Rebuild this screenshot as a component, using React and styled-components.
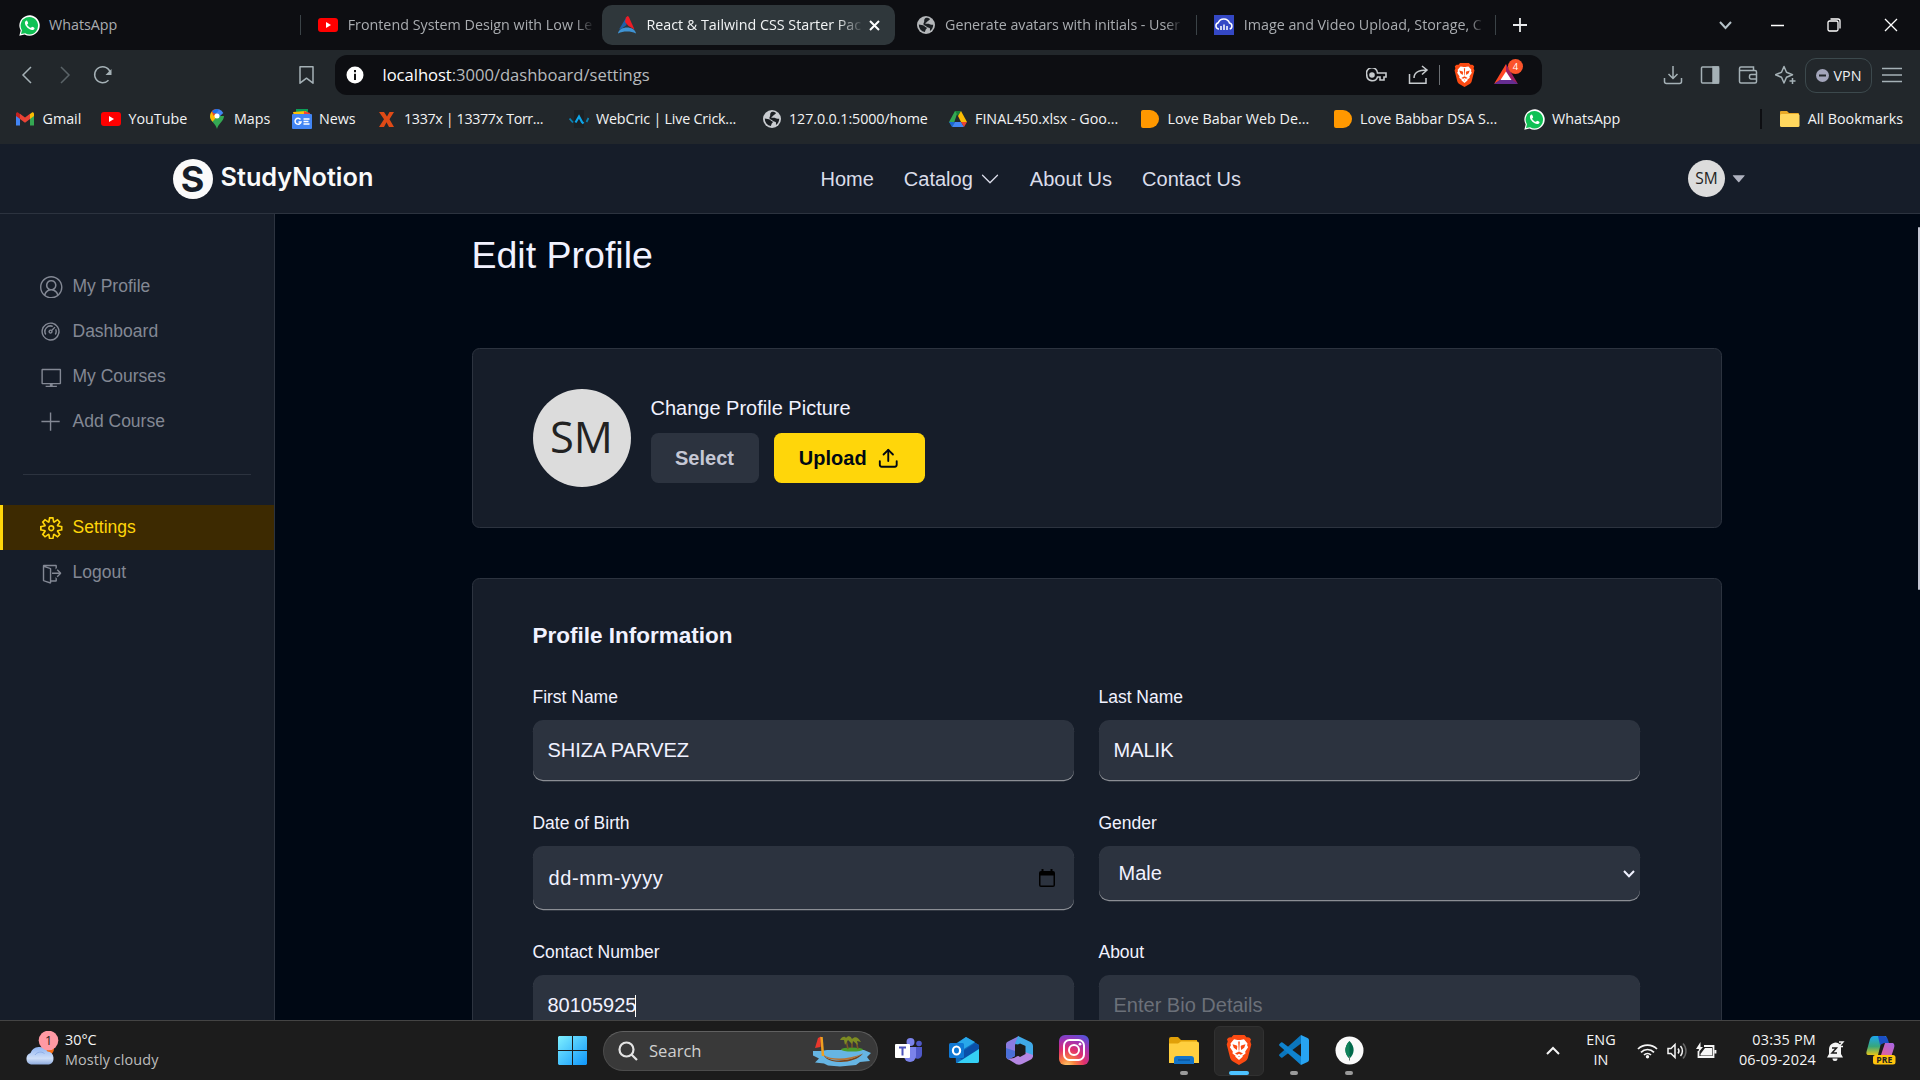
import React from 'react';
import styled, { createGlobalStyle } from 'styled-components';
import {
  VscAccount, VscDashboard, VscVm, VscAdd, VscSettingsGear, VscSignOut,
} from 'react-icons/vsc';
import { BsChevronDown } from 'react-icons/bs';
import { AiOutlineCaretDown } from 'react-icons/ai';
import { FiUpload } from 'react-icons/fi';

const GlobalStyle = createGlobalStyle`
  * { box-sizing: border-box; }
  body { margin: 0; background: #000814; overflow: hidden; }
  svg { display: block; flex: none; }
`;

const ui = '"Open Sans", "Noto Sans", sans-serif';

const Screen = styled.div`
  width: 1920px;
  height: 1080px;
  display: flex;
  flex-direction: column;
  overflow: hidden;
  background: #000814;
  font-family: "Liberation Sans", Arial, sans-serif;
  color: #f1f2ff;
`;

/* ---------- Browser chrome ---------- */
const TabStrip = styled.div`
  height: 50px;
  flex: none;
  display: flex;
  align-items: center;
  padding-left: 4.5px;
  background: #0d0e12;
  font: 14.3px ${ui};
`;

const Tab = styled.div`
  width: 293px;
  height: 40px;
  margin-right: 5.7px;
  flex: none;
  display: flex;
  align-items: center;
  padding: 0 15px;
  border-radius: 10px;
  color: ${(p) => (p.$active ? '#f2f4f5' : '#a9acb0')};
  background: ${(p) => (p.$active ? '#2f373b' : 'transparent')};
`;

const TabTitle = styled.span`
  margin-left: 9.5px;
  padding-bottom: 2px;
  white-space: nowrap;
  letter-spacing: ${(p) => p.$track || 0}px;
  mask-image: ${(p) => (p.$fade ? `linear-gradient(to right, #000 calc(100% - ${p.$fade}px), rgba(0, 0, 0, 0.12))` : 'none')};
`;

const TabRule = styled.i`
  width: 1px;
  height: 20px;
  margin: 0 2px 0 -3px;
  background: #3b4347;
`;

const TabClose = styled.span`
  margin-left: auto;
`;

const NewTab = styled.div`
  width: 44px;
  display: flex;
  justify-content: center;
`;

const WindowButtons = styled.div`
  margin-left: auto;
  display: flex;
  align-items: center;
  padding-right: 22px;
  gap: 43px;
  & > :first-child { margin-right: -4px; }
`;

const Toolbar = styled.div`
  height: 50px;
  flex: none;
  display: flex;
  align-items: center;
  background: #22272b;
  color: #a5b1b6;
  font-family: ${ui};
`;

const NavButtons = styled.div`
  width: 335px;
  height: 40px;
  display: flex;
  align-items: center;
  padding: 0 21px 0 17px;
  gap: 18px;
  & > :last-child { margin-left: auto; }
`;

const Omnibox = styled.div`
  width: 1207px;
  height: 40px;
  display: flex;
  align-items: center;
  padding: 0 18px 0 11px;
  border-radius: 12px;
  background: #0d0e12;
`;

const Url = styled.span`
  margin-left: 18.5px;
  padding-bottom: 2px;
  font-size: 16.6px;
  letter-spacing: -0.03px;
  color: #b7babd;
  b { font-weight: 400; color: #fff; }
`;

const OmniActions = styled.div`
  margin-left: auto;
  display: flex;
  align-items: center;
  gap: 21px;
`;

const Shields = styled.div`
  display: flex;
  align-items: center;
  gap: 14px;
  margin-left: -11px;
`;

const OmniRule = styled.i`
  width: 1px;
  height: 20px;
  background: #6b6f73;
`;

const Rewards = styled.div`
  position: relative;
  margin-left: -2px;
  width: 30px;
  height: 22px;
`;

const Badge = styled.span`
  position: absolute;
  top: -5px;
  right: 1px;
  width: 15px;
  height: 15px;
  border-radius: 8px;
  background: #fb542b;
  color: #fff;
  font-size: 9.5px;
  line-height: 15px;
  text-align: center;
`;

const ToolbarEnd = styled.div`
  margin-left: auto;
  display: flex;
  align-items: center;
  padding-right: 18px;
`;

const ToolIcons = styled.div`
  display: flex;
  gap: 17.5px;
  margin-right: 9px;
`;

const Vpn = styled.div`
  width: 67px;
  height: 35px;
  margin-right: 10px;
  display: flex;
  align-items: center;
  justify-content: center;
  gap: 5px;
  border: 1px solid #3c494d;
  border-radius: 11px;
  color: #eef0f2;
  font-size: 14.3px;
`;

const BookmarkBar = styled.div`
  height: 44px;
  flex: none;
  display: flex;
  align-items: center;
  padding: 0 17px 6px 15px;
  background: #22272b;
  color: #f2f3f4;
  font: 14.3px ${ui};
`;

const Bookmark = styled.div`
  width: ${(p) => p.$width}px;
  flex: none;
  display: flex;
  align-items: center;
  gap: 7.5px;
  white-space: nowrap;
  letter-spacing: ${(p) => p.$track || 0}px;
`;

const BarText = styled.span`
  padding-bottom: 2px;
`;

const IconSlot = styled.span`
  width: 20px;
  height: 20px;
  flex: none;
  display: flex;
  align-items: center;
  justify-content: center;
`;

const AllBookmarks = styled.div`
  margin-left: auto;
  height: 20px;
  display: flex;
  align-items: center;
  gap: 8px;
  padding-left: 18px;
  border-left: 2px solid #0d0e12;
`;

/* ---------- Site ---------- */
const SiteHeader = styled.header`
  height: 70px;
  flex: none;
  display: flex;
  justify-content: center;
  background: #161d29;
  border-bottom: 1px solid #2c333f;
`;

const HeaderInner = styled.div`
  width: 1575px;
  display: flex;
  align-items: center;
`;

const Logo = styled.div`
  width: 648px;
  display: flex;
  align-items: center;
  gap: 8px;
  color: #fafafa;
  font: 600 25.3px/40px Inter, sans-serif;
  white-space: nowrap;
  & > span:last-child { padding-bottom: 3px; }
`;

const LogoMark = styled.span`
  width: 40px;
  height: 40px;
  flex: none;
  display: flex;
  align-items: center;
  justify-content: center;
  border-radius: 50%;
  background: #fafafa;
  color: #161d29;
  font: 700 36px/40px Inter, sans-serif;
`;

const Nav = styled.nav`
  display: flex;
  align-items: center;
  gap: 30px;
  padding-top: 1px;
  font-size: 20px;
  color: #dbddea;
`;

const NavItem = styled.span`
  display: flex;
  align-items: center;
  gap: 7px;
`;

const Account = styled.div`
  margin-left: auto;
  display: flex;
  align-items: center;
  gap: 5px;
  color: #afb2bf;
`;

const Avatar = styled.span`
  width: ${(p) => p.$size}px;
  height: ${(p) => p.$size}px;
  flex: none;
  display: flex;
  align-items: center;
  justify-content: center;
  padding: 0 0 ${(p) => p.$size * 0.03}px;
  border-radius: 50%;
  background: #dcdcdc;
  color: #222;
  font: ${(p) => p.$font}px ${ui};
`;

const Page = styled.div`
  flex: 1;
  min-height: 0;
  display: flex;
  overflow: hidden;
`;

const Sidebar = styled.aside`
  width: 275px;
  flex: none;
  padding-top: 50px;
  background: #161d29;
  border-right: 1px solid #2c333f;
`;

const SideItem = styled.div`
  height: 45px;
  display: flex;
  align-items: center;
  gap: 10px;
  padding-left: ${(p) => (p.$active ? 37 : 40)}px;
  border-left: ${(p) => (p.$active ? '3px solid #ffd60a' : '0')};
  background: ${(p) => (p.$active ? '#3d2a01' : 'transparent')};
  color: ${(p) => (p.$active ? '#ffd60a' : '#838894')};
  font-size: 17.5px;
  svg { margin-top: 1px; }
`;

const SideRule = styled.hr`
  width: 228px;
  height: 1px;
  margin: 30px 0 30px 23px;
  border: 0;
  background: #2c333f;
`;

const Content = styled.main`
  flex: 1;
  display: flex;
  flex-direction: column;
  align-items: center;
  padding: 19px 0 0;
`;

const ScrollTrack = styled.div`
  width: 2px;
  flex: none;
  padding-top: 13px;
`;

const ScrollThumb = styled.div`
  height: 363px;
  border-radius: 1px;
  background: #c5c7d4;
`;

const Column = styled.div`
  width: 1250px;
  display: flex;
  flex-direction: column;
`;

const Title = styled.h1`
  margin: 0 0 70px;
  font-size: 37.5px;
  line-height: 45px;
  font-weight: 400;
`;

const PictureCard = styled.section`
  height: 180px;
  flex: none;
  display: flex;
  align-items: center;
  gap: 20px;
  padding: 0 60px;
  border: 1px solid #2c333f;
  border-radius: 7.5px;
  background: #161d29;
`;

const PictureBody = styled.div`
  display: flex;
  flex-direction: column;
  gap: 10px;
  font-size: 20px;
  line-height: 30px;
`;

const Actions = styled.div`
  display: flex;
  gap: 15px;
`;

const Button = styled.button`
  width: ${(p) => p.$width}px;
  height: 50px;
  padding: 0;
  display: flex;
  align-items: center;
  justify-content: center;
  gap: 10px;
  border: 0;
  border-radius: 7.5px;
  background: ${(p) => (p.$primary ? '#ffd60a' : '#2c333f')};
  color: ${(p) => (p.$primary ? '#000814' : '#c5c7d4')};
  font: 700 20px "Liberation Sans", Arial, sans-serif;
`;

const FormCard = styled.section`
  height: 560px;
  flex: none;
  margin-top: 50px;
  padding: 39px 60px;
  border: 1px solid #2c333f;
  border-radius: 7.5px;
  background: #161d29;
`;

const FormTitle = styled.h2`
  margin: 0 0 31px;
  font-size: 22.5px;
  line-height: 35px;
  font-weight: 700;
`;

const Fields = styled.div`
  display: grid;
  grid-template-columns: 541px 541.5px;
  column-gap: 25px;
  row-gap: 30px;
  align-items: start;
`;

const Field = styled.div`
  display: flex;
  flex-direction: column;
  gap: 10px;
`;

const Label = styled.span`
  font-size: 17.5px;
  line-height: 26px;
  letter-spacing: -0.02px;
`;

const Control = styled.div`
  height: ${(p) => p.$height || 60}px;
  display: flex;
  align-items: center;
  padding: 1px ${(p) => p.$right || 15}px 0 ${(p) => p.$left || 15}px;
  border-radius: 10px;
  background: #2c333f;
  box-shadow: 0 1.25px 0 rgba(255, 255, 255, 0.5);
  color: ${(p) => (p.$placeholder ? '#6b7079' : '#f1f2ff')};
  font-size: 20px;
  & > svg { margin-left: auto; }
`;

const DateText = styled.span`
  letter-spacing: 0.6px;
`;

const Caret = styled.i`
  width: 1px;
  height: 22px;
  margin-left: -1px;
  background: #fff;
`;

/* ---------- Taskbar ---------- */
const Taskbar = styled.footer`
  height: 60px;
  flex: none;
  display: flex;
  align-items: center;
  background: #1c1c1c;
  border-top: 1px solid #444;
  color: #f5f5f5;
  font: 14.4px/20px ${ui};
`;

const Weather = styled.div`
  width: 547px;
  padding-left: 23px;
  display: flex;
  align-items: center;
  gap: 6px;
`;

const WeatherText = styled.div`
  display: flex;
  flex-direction: column;
  padding-bottom: 2px;
  span:last-child { color: #bdbdbd; letter-spacing: 0.1px; }
`;

const TaskApps = styled.div`
  display: flex;
  align-items: center;
`;

const TaskButton = styled.div`
  position: relative;
  width: 50px;
  height: 50px;
  margin-right: ${(p) => (p.$gap == null ? 5 : p.$gap)}px;
  flex: none;
  display: flex;
  align-items: center;
  justify-content: center;
  padding-bottom: 1px;
  border-radius: 6px;
  border: 1px solid ${(p) => (p.$active ? '#313131' : 'transparent')};
  background: ${(p) => (p.$active ? '#282828' : 'transparent')};
`;

const RunMark = styled.i`
  position: absolute;
  bottom: 0;
  left: 50%;
  width: ${(p) => (p.$active ? 20 : 8)}px;
  height: 4px;
  margin-left: ${(p) => (p.$active ? -10 : -4)}px;
  border-radius: 2px;
  background: ${(p) => (p.$active ? '#4cc2ff' : '#9a9a9a')};
`;

const SearchBox = styled.div`
  width: 275px;
  height: 40px;
  margin-right: 6px;
  display: flex;
  align-items: center;
  padding: 0 5px 0 14px;
  border: 1px solid #4c4c4c;
  border-top-color: #606060;
  border-radius: 20px;
  background: #393939;
  color: #d0d0d0;
  font-size: 16.6px;
  span { margin-left: 11px; }
  svg:last-child { margin-left: auto; }
`;

const Tray = styled.div`
  margin-left: auto;
  display: flex;
  align-items: center;
  padding-right: 24px;
`;

const Language = styled.div`
  width: 50px;
  margin: 0 11px 0 16px;
  padding-bottom: 1px;
  text-align: center;
`;

const TrayIcons = styled.div`
  display: flex;
  align-items: center;
  gap: 9px;
`;

const Clock = styled.div`
  width: 90px;
  margin: 0 11px 0 9px;
  padding-bottom: 2px;
  text-align: right;
  white-space: nowrap;
  letter-spacing: 0.2px;
`;

const Copilot = styled.div`
  margin-left: 21px;
`;

/* ---------- Icons ---------- */
const Stroke = ({ w = 20, h = 20, box, sw = 1.5, children, ...rest }) => (
  <svg width={w} height={h} viewBox={box || `0 0 ${w} ${h}`} fill="none" stroke="currentColor" strokeWidth={sw} {...rest}>
    {children}
  </svg>
);

const WhatsAppIcon = () => (
  <svg width="21" height="21" viewBox="0 0 20 20">
    <path d="M.3 19.8l1.3-5A9.7 9.7 0 1110 19.7a9.7 9.7 0 01-4.700-1.200z" fill="#fff" />
    <path d="M1.900 18.200l.9-3.600a8.300 8.300 0 117.200 3.900 8.300 8.300 0 01-4.100-1.200z" fill="#10c154" />
    <path d="M7.200 5.300c-.5 0-1.700.9-1.600 2.400.2 3 4 6.600 6.900 6.700 1.400 0 2.300-1 2.300-1.900 0-.5-2-1.500-2.400-1.400-.5.200-.8 1.200-1.300 1.100-1.200-.3-3-2-3.300-3 0-.4.900-.8.900-1.300 0-.6-.8-2.600-1.500-2.600z" fill="#fff" />
  </svg>
);

const YouTubeIcon = () => (
  <svg width="20" height="14" viewBox="0 0 20 14">
    <rect width="20" height="14" rx="3" fill="#f00" />
    <path d="M8 4l5 3-5 3z" fill="#fff" />
  </svg>
);

const AppIcon = () => (
  <svg width="20" height="18" viewBox="0 0 20 18">
    <path d="M9.500 1L9.500 9 5 12.500l-3 1z" fill="#1e5fa8" />
    <path d="M9 1.500L10.500 0l1.300.8L17.500 13.500 11.500 10 8 6z" fill="#ee1c25" />
    <path d="M1 17.500c.5-4 5-6 9-6s8.500 2 9 6c-3-1.500-5.500-2-9-2s-6 .5-9 2z" fill="#3f93d3" />
  </svg>
);

const GlobeIcon = ({ color }) => (
  <svg width="18" height="18" viewBox="0 0 18 18">
    <circle cx="9" cy="9" r="9" fill={color} />
    <path d="M1.800 8.500l4.200.7c1.500.3 1.600 1.700 3 2 1 .3 1 1.300.2 1.900-.8.700-.6 1.800-1.400 3A7.300 7.300 0 011.800 8.500zM9 1.700c1.300-.1 3 .3 4 1.200-.2 1-1.200.8-1.500 1.700-.2.900-1.200.8-1.700 1.500-.4.700-1.400.5-1.600 1.400 1.500.4 3.300-.2 4.500.7.900.7 2.300.2 3.500.6A7.300 7.300 0 0113 14.900c-.3-1.300.6-2-.4-2.900-.8-.7-2.200-.4-2.900-1.300C8.800 9.600 6.500 9.500 6.400 8c0-1.300 1-1.800.8-3C7 3.600 7.800 1.900 9 1.700z" fill="#1b1f23" />
  </svg>
);

const CloudIcon = () => (
  <svg width="20" height="20" viewBox="0 0 20 20">
    <rect width="20" height="20" fill="#3448c5" />
    <path d="M5 14H4.500a3.200 3.200 0 01-.3-6.200A6 6 0 0115.500 8a3.100 3.100 0 01.2 6M7 15v-4M10 15V9.500M13 15v-4" fill="none" stroke="#fff" strokeWidth="1.500" />
  </svg>
);

const GmailIcon = () => (
  <svg width="18" height="14" viewBox="0 0 18 14">
    <path d="M0 2v11.500h4V6z" fill="#4285f4" />
    <path d="M18 2v11.500h-4V6z" fill="#34a853" />
    <path d="M14 2l2-1.600c1-.6 2 .2 2 1.600v2l-4 3z" fill="#fbbc04" />
    <path d="M4 2L2 .4C1 -.2 0 .6 0 2v2l4 3z" fill="#c5221f" />
    <path d="M4 1.800l5 3.800 5-3.800V7l-5 3.800L4 7z" fill="#ea4335" />
  </svg>
);

const MapsIcon = () => (
  <svg width="14" height="20" viewBox="0 0 14 20">
    <path d="M7 20C6 15 0 12 0 7h14c0 5-6 8-7 13z" fill="#34a853" />
    <path d="M0 7c0 2.500 1.200 4.200 2.500 5.700L10 4 4 1A7 7 0 000 7z" fill="#fbbc04" />
    <path d="M1.600 2.500A7 7 0 019.300.4L3.500 7z" fill="#ea4335" />
    <path d="M9 .3A7 7 0 0113.300 4L9 8 5.500 4.500z" fill="#4285f4" />
    <path d="M2 2.200A7 7 0 019 .3L6.500 4 4 4.500z" fill="#1a73e8" />
    <circle cx="7" cy="7" r="2.500" fill="#fff" />
  </svg>
);

const NewsIcon = () => (
  <svg width="20" height="20" viewBox="0 0 20 20">
    <path d="M4 0h12v6H4z" fill="#0c9d58" />
    <path d="M1 3l13-1 3 5H2z" fill="#ffc107" />
    <path d="M12 2l6 2-1 4h-5z" fill="#f44336" />
    <rect y="5" width="20" height="15" rx="1" fill="#4285f4" />
    <path d="M8.500 10.500A3 3 0 109 13H6.500M11.500 10h6M11.500 12.500h5M11.500 15h6" fill="none" stroke="#fff" strokeWidth="1.500" />
  </svg>
);

const XIcon = () => (
  <svg width="15" height="15" viewBox="0 0 15 15">
    <path d="M0 0h5l3 4.500L10.500 0H15l-4.500 7.300L15 15h-5l-2.500-4.700L5 15H0l5-7.700z" fill="#df4a16" />
  </svg>
);

const CricIcon = () => (
  <svg width="20" height="20" viewBox="0 0 20 20" fill="none">
    <path d="M5 1h10v18H5z" fill="#1c2023" />
    <path d="M0.500 9.500l3.500 4M19.500 9l-2 4" stroke="#0b84b5" strokeWidth="1.800" />
    <path d="M6.500 13.500l3.500-6 3 5.500 1.500 1.500" stroke="#0ea5e9" strokeWidth="2.200" />
  </svg>
);

const DriveIcon = () => (
  <svg width="18" height="16" viewBox="0 0 18 16">
    <path d="M6 0h3L4 15 0 11z" fill="#34a853" />
    <path d="M6 0h6L9 5z" fill="#188038" />
    <path d="M12 0l6 11h-6L9 5z" fill="#fbbc04" />
    <path d="M0 11h6l-3 5z" fill="#1967d2" />
    <path d="M6 11h6l3 5H3z" fill="#4285f4" />
    <path d="M12 11h6l-3 5z" fill="#ea4335" />
  </svg>
);

const OrangeD = () => (
  <svg width="18" height="18" viewBox="0 0 18 18">
    <path d="M2 0h7a9 9 0 010 18H2a2 2 0 01-2-2V2a2 2 0 012-2z" fill="#ff9800" />
  </svg>
);

const FolderIcon = () => (
  <svg width="20" height="18" viewBox="0 0 20 18">
    <path d="M0 2a1 1 0 011-1h6l2 2h9a1 1 0 011 1v12H0z" fill="#e8a927" />
    <rect y="4" width="19.500" height="13" rx="1.500" fill="#ffd75e" />
  </svg>
);

const BraveIcon = ({ size, h }) => (
  <svg width={size} height={h} viewBox="0 0 26 30" preserveAspectRatio="none">
    <path d="M7.500 0h11l2.300 2.400c2-.5 3 .3 4.200 1.800L24.300 6.500l1 3-3.400 13.200c-.5 1.700-1.200 2.500-2.500 3.500L13 30l-6.400-3.800c-1.300-1-2-1.800-2.500-3.500L.7 9.500l1-3L1 4.200c1.200-1.500 2.200-2.300 4.200-1.800z" fill="#fb4a12" />
    <path d="M8 4.300l2.500.5c1.500.4 3.500.4 5 0l2.500-.5 3.500 4.200-.4 1.800 1 2-2.900 4.200.3 2-3 2.300.2 1L13 25l-3.700-3.200.2-1-3-2.300.3-2L3.900 12.300l1-2-.4-1.800z" fill="#fff" />
    <path d="M6.500 9.300l4.300 1.200.5 1-.5 3.500-3-2.200zM19.500 9.300l-4.300 1.200-.5 1 .5 3.500 3-2.200zM12.200 6.500h1.600l-.5 9h-.6zM9 18.600l4-2 4 2-2.300 1.200L13 18.700l-1.700 1.100zM12.300 21h1.400l-.7 1.300z" fill="#fb4a12" />
  </svg>
);

const BatIcon = () => (
  <svg width="24" height="20" viewBox="0 0 24 20">
    <path d="M12 0L0 20l12-7z" fill="#ff4724" />
    <path d="M12 0l12 20-12-7z" fill="#9e1f63" />
    <path d="M0 20h24l-7-5H7z" fill="#662d91" />
    <path d="M12 7.500L17.500 16h-11z" fill="#fff" />
  </svg>
);

const WeatherIcon = () => (
  <svg width="36" height="40" viewBox="0 0 36 40">
    <defs>
      <linearGradient id="cloud" x1="0" y1="0" x2="0" y2="1">
        <stop offset="0" stopColor="#8fb4f2" />
        <stop offset=".65" stopColor="#cfdff8" />
        <stop offset="1" stopColor="#8facde" />
      </linearGradient>
    </defs>
    <circle cx="25" cy="18" r="6" fill="#f26a11" />
    <path d="M8 33.500a6 6 0 01-.5-11.500 9.500 9.500 0 0117-1.500A6.700 6.700 0 0126 33.500z" fill="url(#cloud)" />
    <path d="M12 24c2-3 6-4 9.500-1.500" fill="none" stroke="#8fb0e8" />
    <circle cx="25.500" cy="9.500" r="9.800" fill="#ff99a4" />
    <text x="25.500" y="14" textAnchor="middle" fontFamily="Open Sans" fontSize="12.500" fill="#1b1b1b">1</text>
  </svg>
);

const StartIcon = () => (
  <svg width="29" height="29" viewBox="0 0 29 29">
    <defs>
      <linearGradient id="win" x1="0" y1="0" x2="1" y2="1">
        <stop offset="0" stopColor="#7ff0ff" />
        <stop offset="1" stopColor="#0f96fb" />
      </linearGradient>
    </defs>
    <path d="M1 0h13v14H0V1zM15 0h13l1 1v13H15zM0 15h14v14H1l-1-1zM15 15h14v13l-1 1H15z" fill="url(#win)" />
  </svg>
);

const BoatArt = () => (
  <svg width="60" height="32" viewBox="0 0 60 32">
    <path d="M1 16h8l6-1h14l10-1 13 1 7 3-4 4 3 4-10 1-4 3-16 1.500-12-1-4-2-9-1 4-4-6-3z" fill="#66b5e3" />
    <ellipse cx="40" cy="14.500" rx="11" ry="2" fill="#4c9a2a" />
    <path d="M36 14l-2-9M46 14l-2-8M40 13V6" stroke="#7a5a26" strokeWidth="1.500" fill="none" />
    <path d="M28 5c2-4 5-4 6-2 2-3 5-2 6 1 3-3 6-2 9 3l-4-1 1 4-5-4-1 3-4-4-3 5-1-5z" fill="#7d8c22" />
    <path d="M10 12l1.500 8c6 8 26 7 39.500-1.500C45 26 31 28.500 20 26 12 23.500 10 20 10 12z" fill="#7a4217" />
    <path d="M11.500 20c8 5 24 5 39.500-1.500-8 4-12 7-24 6.500-9-.5-14-2-15.500-5z" fill="#b87333" />
    <path d="M3 13l3-10 3-1.500L8.500 12z" fill="#e8372c" />
    <path d="M9.500 2l1.500 19" stroke="#f0a020" strokeWidth="2.500" />
  </svg>
);

const TeamsIcon = () => (
  <svg width="28" height="25" viewBox="0 0 28 25">
    <circle cx="15.500" cy="4" r="4" fill="#7b83eb" />
    <circle cx="24" cy="5.500" r="2.800" fill="#5059c9" />
    <path d="M19 9h8v7a4.500 4.500 0 01-8 3z" fill="#5059c9" />
    <path d="M9 9h12v9a6 6 0 01-12 0z" fill="#7b83eb" />
    <rect y="6" width="15" height="14" rx="1" fill="#fff" />
    <path d="M4 9.500h7M7.500 9.500v8" stroke="#4b53bc" strokeWidth="2" />
  </svg>
);

const OutlookIcon = () => (
  <svg width="30" height="27" viewBox="0 0 30 27">
    <path d="M6 7L17 0l13 8v16a2 2 0 01-2 2H7z" fill="#0f6cbd" />
    <path d="M17 0l9 5-16 10-3-8z" fill="#28a8ea" />
    <path d="M30 8v6L14 24l-6-6L26 6z" fill="#0a4fa8" />
    <path d="M30 12v12a2 2 0 01-2 2H8z" fill="#35d0f5" />
    <rect y="6" width="15" height="15" rx="1.500" fill="#0f78d4" />
    <ellipse cx="7.500" cy="13.500" rx="3.600" ry="4" fill="none" stroke="#fff" strokeWidth="2.200" />
  </svg>
);

const OfficeIcon = () => (
  <svg width="27" height="29" viewBox="0 0 27 29">
    <path d="M13 0L2 5.500A3 3 0 000 8v12c0 2 1 3 2.500 3.500L9 20V9z" fill="#8b7be0" />
    <path d="M12 0l11.500 5.500A5 5 0 0127 10v11l-8-3v-8L9 8z" fill="#3fa9e8" />
    <path d="M27 19c0 3-1 4-3 5l-8 4c-2 1-4 1-6 0L2 23l6-1 11-6z" fill="#b587e3" />
    <path d="M9 20l-7 3.500L0 20V12l9 3z" fill="#4a6fd8" />
    <path d="M9 10l5-2.500 5.500 2.500v8L14 21l-5-3z" fill="#1c1c1c" />
  </svg>
);

const InstagramIcon = () => (
  <svg width="30" height="30" viewBox="0 0 30 30">
    <defs>
      <radialGradient id="ig" cx=".28" cy="1.050" r="1.150">
        <stop offset="0" stopColor="#fed373" />
        <stop offset=".22" stopColor="#f9833f" />
        <stop offset=".5" stopColor="#e1306c" />
        <stop offset=".78" stopColor="#a033b5" />
        <stop offset="1" stopColor="#5b51d8" />
      </radialGradient>
    </defs>
    <rect width="30" height="30" rx="6" fill="url(#ig)" />
    <rect x="5" y="5" width="20" height="20" rx="5.500" fill="none" stroke="#fff" strokeWidth="2" />
    <circle cx="15" cy="15" r="5" fill="none" stroke="#fff" strokeWidth="2" />
    <circle cx="21" cy="9.200" r="1.400" fill="#fff" />
  </svg>
);

const ExplorerIcon = () => (
  <svg width="30" height="27" viewBox="0 0 30 27">
    <path d="M0 2a2 2 0 012-2h7l3 3h16v8H0z" fill="#e0a008" />
    <path d="M12 4.500h16a2 2 0 012 2V26H0V6.500h9z" fill="#ffcf3f" />
    <path d="M5 22a3 3 0 013-3h14a3 3 0 013 3v5H5z" fill="#1374c9" />
    <path d="M9 23h12" stroke="#0a4f96" strokeWidth="1.200" />
  </svg>
);

const VsCodeIcon = () => (
  <svg width="30" height="30" viewBox="0 0 30 30">
    <path d="M22 8.500L3.500 22.500a1.200 1.200 0 01-1.500 0L.5 21a1.200 1.200 0 010-1.700L22 0z" fill="#0b76bd" />
    <path d="M22 21.500L3.500 7.500a1.200 1.200 0 00-1.500 0L.5 9a1.200 1.200 0 000 1.700L22 30z" fill="#0f83cf" />
    <path d="M22 0l6.500 3A2.500 2.500 0 0130 5v20a2.500 2.500 0 01-1.500 2L22 30z" fill="#27a4f2" />
  </svg>
);

const MongoIcon = () => (
  <svg width="29" height="29" viewBox="0 0 29 29">
    <circle cx="14.500" cy="14.500" r="14" fill="#fafafa" />
    <path d="M14.500 5c6 6 5 13 0 17.500C9.500 18 8.500 11 14.500 5z" fill="#00684a" />
    <path d="M14.500 5c-6 6-5 13 0 17.500z" fill="#12825b" />
    <path d="M14.500 20v4.500" stroke="#5c7a6c" />
  </svg>
);

const CopilotIcon = () => (
  <svg width="30" height="29" viewBox="0 0 30 29">
    <defs>
      <linearGradient id="cp1" x1="0" y1="0" x2="0" y2="1">
        <stop offset="0" stopColor="#1ca7ee" />
        <stop offset=".55" stopColor="#38a67b" />
        <stop offset="1" stopColor="#e6c619" />
      </linearGradient>
      <linearGradient id="cp2" x1="1" y1="0" x2="0" y2="1">
        <stop offset="0" stopColor="#a566e8" />
        <stop offset="1" stopColor="#f0608a" />
      </linearGradient>
    </defs>
    <path d="M8 0h12l2 6-7 1-3 12H3c-3 0-3-2-2-5L4 3c1-2 2-3 4-3z" fill="url(#cp1)" />
    <path d="M12 0h6c2 0 3 1 4 4l1 3h-5l-4 2z" fill="#1b4fc4" />
    <path d="M19 7h7c2 0 3 2 2 5l-3 9H12c3 0 3-2 4-5z" fill="url(#cp2)" />
    <rect x="7" y="19" width="22.500" height="9.500" rx="2.500" fill="#ffc40c" />
    <text x="18.300" y="27" textAnchor="middle" fontFamily="Open Sans" fontWeight="700" fontSize="8.600" fill="#222">PRE</text>
  </svg>
);

/* ---------- Data ---------- */
const tabs = [
  { title: 'WhatsApp', icon: <WhatsAppIcon /> },
  { title: 'Frontend System Design with Low Le', icon: <YouTubeIcon />, fade: 16, rule: true },
  { title: 'React & Tailwind CSS Starter Pac', icon: <AppIcon />, fade: 24, active: true },
  { title: 'Generate avatars with initials - User', icon: <GlobeIcon color="#b4b7ba" />, fade: 14, track: -0.05 },
  { title: 'Image and Video Upload, Storage, C', icon: <CloudIcon />, fade: 12, rule: true },
];

const bookmarks = [
  { title: 'Gmail', icon: <GmailIcon />, width: 86 },
  { title: 'YouTube', icon: <YouTubeIcon />, width: 105.5 },
  { title: 'Maps', icon: <MapsIcon />, width: 85 },
  { title: 'News', icon: <NewsIcon />, width: 85 },
  { title: '1337x | 13377x Torr...', icon: <XIcon />, width: 192, track: -0.36 },
  { title: 'WebCric | Live Crick...', icon: <CricIcon />, width: 193, track: -0.2 },
  { title: '127.0.0.1:5000/home', icon: <GlobeIcon color="#c9ccd0" />, width: 186, track: -0.1 },
  { title: 'FINAL450.xlsx - Goo...', icon: <DriveIcon />, width: 192.5 },
  { title: 'Love Babar Web De...', icon: <OrangeD />, width: 192.5 },
  { title: 'Love Babbar DSA S...', icon: <OrangeD />, width: 192 },
  { title: 'WhatsApp', icon: <WhatsAppIcon />, width: 110 },
];

const mainLinks = [
  ['My Profile', VscAccount],
  ['Dashboard', VscDashboard],
  ['My Courses', VscVm],
  ['Add Course', VscAdd],
];

export default function App() {
  return (
    <Screen>
      <GlobalStyle />
      <TabStrip>
        {tabs.map((t) => (
          <React.Fragment key={t.title}>
            {t.rule && <TabRule />}
            <Tab $active={t.active}>
              <IconSlot>{t.icon}</IconSlot>
              <TabTitle $fade={t.fade} $track={t.track}>{t.title}</TabTitle>
              {t.active && (
                <TabClose>
                  <Stroke w={11} h={11} sw={2} color="#fff"><path d="M1 1l9 9M10 1l-9 9" /></Stroke>
                </TabClose>
              )}
            </Tab>
          </React.Fragment>
        ))}
        <TabRule />
        <NewTab><Stroke w={14} h={14} sw={1.8} color="#e8eaec"><path d="M7 0v14M0 7h14" /></Stroke></NewTab>
        <WindowButtons>
          <Stroke w={13} h={9} sw={2} color="#b5c2c8"><path d="M1 1l5.500 6L12 1" /></Stroke>
          <Stroke w={13} h={13} sw={1.500} color="#fff"><path d="M0 6.500h13" /></Stroke>
          <Stroke w={14} h={14} sw={1.300} color="#fff"><rect x="1" y="3" width="10" height="10" rx="1.500" /><path d="M3.500 1H11a2 2 0 012 2v7.500" /></Stroke>
          <Stroke w={14} h={14} sw={1.300} color="#fff"><path d="M1 1l12 12M13 1L1 13" /></Stroke>
        </WindowButtons>
      </TabStrip>

      <Toolbar>
        <NavButtons>
          <Stroke><path d="M14 2L6 10l8 8" /></Stroke>
          <Stroke color="#5b6468"><path d="M6 2l8 8-8 8" /></Stroke>
          <Stroke>
            <path d="M15.500 15.200A8 8 0 1117.500 8" />
            <path d="M18.500 4v6h-6z" fill="currentColor" stroke="none" />
          </Stroke>
          <Stroke w={15} h={20}><path d="M1 1.800h13v16.400l-6.500-5-6.500 5z" strokeLinejoin="round" /></Stroke>
        </NavButtons>
        <Omnibox>
          <svg width="18" height="18" viewBox="0 0 18 18">
            <circle cx="9" cy="9" r="8.500" fill="#fff" />
            <path d="M9 4v2.300M9 7.700V14" stroke="#111" strokeWidth="2" />
          </svg>
          <Url><b>localhost</b>:3000/dashboard/settings</Url>
          <OmniActions>
            <Stroke w={21} h={14} sw={1.600} color="#c7cbce">
              <path d="M11.500 5A5.500 5.500 0 100.800 7a5.500 5.500 0 0010.700 2H14v3h4V9h2V5z" />
              <circle cx="6" cy="7" r="2" fill="currentColor" />
            </Stroke>
            <Stroke w={21} h={20} sw={1.500} color="#c7cbce">
              <path d="M1.500 9v9.200H18V13M6 13c0-5 4-8 13-8M14 1l5 4-5 4.500" />
            </Stroke>
            <Shields>
              <OmniRule />
              <BraveIcon size={21} h={24} />
            </Shields>
            <Rewards><BatIcon /><Badge>4</Badge></Rewards>
          </OmniActions>
        </Omnibox>
        <ToolbarEnd>
          <ToolIcons>
            <Stroke><path d="M10 1v12M5.500 9l4.500 4.500L14.500 9M1.500 13v3.500a2 2 0 002 2h13a2 2 0 002-2V13" /></Stroke>
            <Stroke><rect x="1.500" y="2" width="17" height="16" rx="1" /><path d="M13 2h5.500v16H13z" fill="currentColor" /></Stroke>
            <Stroke><path d="M2 5.500h15a1.500 1.500 0 011.500 1.500v9.500A1.500 1.500 0 0117 18H3a1.500 1.500 0 01-1.500-1.500V3.500A1.500 1.500 0 013 2h12.500v3.500M18.500 9.500H13a1.500 1.500 0 00-1.500 1.500v1.500A1.500 1.500 0 0013 14h5.500" /></Stroke>
            <Stroke w={21}><path d="M9 1.500l2.500 5.800 6 2.500-6 2.500L9 18l-2.500-5.700-6-2.500 6-2.500z" strokeLinejoin="round" /><path d="M17.500 13v6M14.500 16h6" /></Stroke>
          </ToolIcons>
          <Vpn>
            <svg width="13" height="13" viewBox="0 0 13 13"><circle cx="6.500" cy="6.500" r="6.500" fill="#a3a5bb" /><path d="M3 6.500h7" stroke="#22272b" strokeWidth="2" /></svg>
            VPN
          </Vpn>
          <Stroke h={16}><path d="M0 1.500h20M0 8h20M0 14.500h20" /></Stroke>
        </ToolbarEnd>
      </Toolbar>

      <BookmarkBar>
        {bookmarks.map((b, i) => (
          <Bookmark key={i} $width={b.width} $track={b.track}>
            <IconSlot>{b.icon}</IconSlot>
            <BarText>{b.title}</BarText>
          </Bookmark>
        ))}
        <AllBookmarks><FolderIcon /><BarText>All Bookmarks</BarText></AllBookmarks>
      </BookmarkBar>

      <SiteHeader>
        <HeaderInner>
          <Logo>
            <LogoMark>S</LogoMark>
            <span>StudyNotion</span>
          </Logo>
          <Nav>
            <NavItem>Home</NavItem>
            <NavItem>Catalog <BsChevronDown size={20} /></NavItem>
            <NavItem>About Us</NavItem>
            <NavItem>Contact Us</NavItem>
          </Nav>
          <Account>
            <Avatar $size={37} $font={15.5}>SM</Avatar>
            <AiOutlineCaretDown size={17.5} />
          </Account>
        </HeaderInner>
      </SiteHeader>

      <Page>
        <Sidebar>
          {mainLinks.map(([name, Icon]) => (
            <SideItem key={name}><Icon size={22.5} />{name}</SideItem>
          ))}
          <SideRule />
          <SideItem $active><VscSettingsGear size={22.5} />Settings</SideItem>
          <SideItem><VscSignOut size={22.5} />Logout</SideItem>
        </Sidebar>
        <Content>
          <Column>
            <Title>Edit Profile</Title>
            <PictureCard>
              <Avatar $size={98} $font={43.5}>SM</Avatar>
              <PictureBody>
                Change Profile Picture
                <Actions>
                  <Button $width={108}>Select</Button>
                  <Button $width={151} $primary>Upload <FiUpload size={22.5} /></Button>
                </Actions>
              </PictureBody>
            </PictureCard>
            <FormCard>
              <FormTitle>Profile Information</FormTitle>
              <Fields>
                <Field><Label>First Name</Label><Control>SHIZA PARVEZ</Control></Field>
                <Field><Label>Last Name</Label><Control>MALIK</Control></Field>
                <Field>
                  <Label>Date of Birth</Label>
                  <Control $height={63} $left={16} $right={19}>
                    <DateText>dd-mm-yyyy</DateText>
                    <svg width="16" height="18" viewBox="0 0 16 18">
                      <path d="M2.500 0h2v2h7V0h2v2H14a2 2 0 012 2v12a2 2 0 01-2 2H2a2 2 0 01-2-2V4a2 2 0 012-2h.5zM1.500 6.500V16.500h13V6.500z" fill="#000" fillRule="evenodd" />
                    </svg>
                  </Control>
                </Field>
                <Field>
                  <Label>Gender</Label>
                  <Control $height={54} $left={20} $right={5}>
                    Male
                    <Stroke w={12} h={8} sw={2}><path d="M1 1l5 5.300L11 1" /></Stroke>
                  </Control>
                </Field>
                <Field><Label>Contact Number</Label><Control>80105925<Caret /></Control></Field>
                <Field><Label>About</Label><Control $placeholder>Enter Bio Details</Control></Field>
              </Fields>
            </FormCard>
          </Column>
        </Content>
        <ScrollTrack><ScrollThumb /></ScrollTrack>
      </Page>

      <Taskbar>
        <Weather>
          <WeatherIcon />
          <WeatherText><span>30°C</span><span>Mostly cloudy</span></WeatherText>
        </Weather>
        <TaskApps>
          <TaskButton $gap={6}><StartIcon /></TaskButton>
          <SearchBox>
            <Stroke w={20} h={20} sw={2.200} color="#e4e4e4"><circle cx="8.500" cy="8.500" r="7" /><path d="M13.500 13.500l5.500 5.500" /></Stroke>
            <span>Search</span>
            <BoatArt />
          </SearchBox>
          <TaskButton><TeamsIcon /></TaskButton>
          <TaskButton><OutlookIcon /></TaskButton>
          <TaskButton><OfficeIcon /></TaskButton>
          <TaskButton $gap={60}><InstagramIcon /></TaskButton>
          <TaskButton><ExplorerIcon /><RunMark /></TaskButton>
          <TaskButton $active><BraveIcon size={26} h={30} /><RunMark $active /></TaskButton>
          <TaskButton><VsCodeIcon /><RunMark /></TaskButton>
          <TaskButton><MongoIcon /><RunMark /></TaskButton>
        </TaskApps>
        <Tray>
          <Stroke w={14} h={9} sw={2}><path d="M1 8l6-6 6 6" /></Stroke>
          <Language>ENG<br />IN</Language>
          <TrayIcons>
            <Stroke w={21} h={16} sw={1.700}>
              <path d="M1 6a13.400 13.400 0 0119 0M4 9.300a9 9 0 0113 0M7 12a5 5 0 017 0" />
              <circle cx="10.500" cy="13.700" r="1.700" fill="currentColor" stroke="none" />
            </Stroke>
            <Stroke w={20} h={18} sw={1.500}>
              <path d="M1 6.500h3L8 2.500v13l-4-4H1zM11 6.500a4 4 0 010 5M13.500 4a7.500 7.500 0 010 10" />
              <path d="M16 1.500a11 11 0 010 15" stroke="#666" />
            </Stroke>
            <Stroke w={21} h={17} sw={1.800}>
              <path d="M8 4h9.500v11H2.500V9M19.500 8v3.500" />
              <path d="M9 6h7v7.500H4.500V12z" fill="currentColor" stroke="none" />
              <path d="M4.500 0L0 7h3L2 11l5-6H4.500z" fill="currentColor" stroke="none" />
            </Stroke>
          </TrayIcons>
          <Clock>03:35 PM<br />06-09-2024</Clock>
          <svg width="18" height="20" viewBox="0 0 18 20">
            <path d="M0 16.500l2-3.500V8a6.500 6.500 0 0111-4.500L14 6v7l2 3.500zM5.500 17.500h5a2.500 2.500 0 01-5 0z" fill="#f5f5f5" />
            <path d="M5 7h4.500L5 12h5" fill="none" stroke="#1c1c1c" strokeWidth="1.500" />
            <path d="M12 1h4l-4 4.500h4" fill="none" stroke="#f5f5f5" strokeWidth="1.400" />
          </svg>
          <Copilot><CopilotIcon /></Copilot>
        </Tray>
      </Taskbar>
    </Screen>
  );
}
